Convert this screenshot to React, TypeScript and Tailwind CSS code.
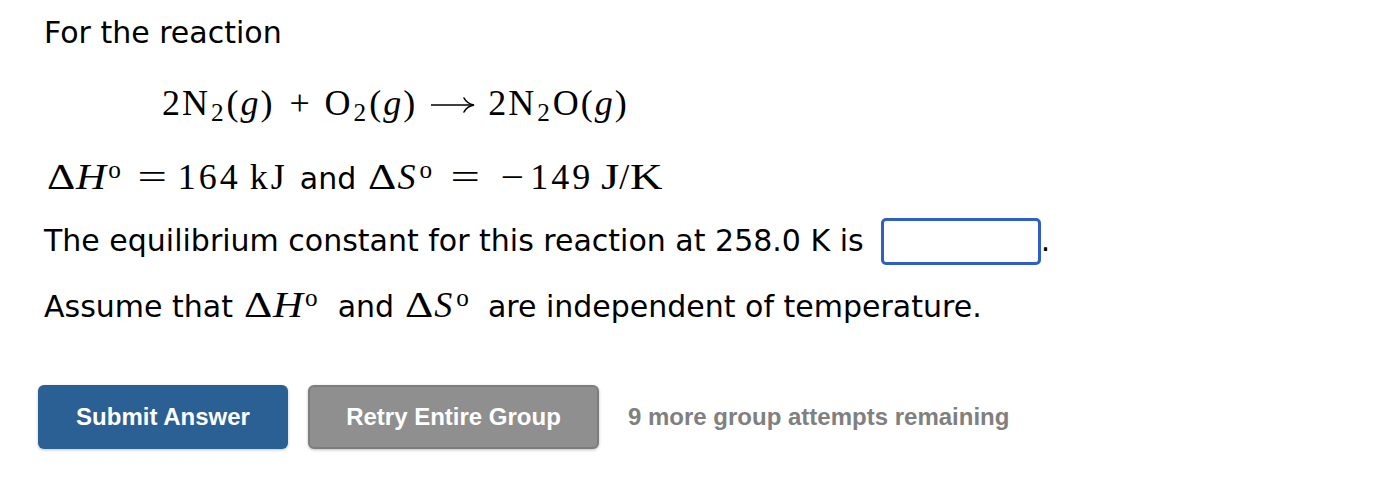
import React from "react";

const SERIF = "[font-family:'Liberation_Serif','DejaVu_Serif',serif] whitespace-nowrap ";

const Sub: React.FC<{ children: React.ReactNode }> = ({ children }) => (
  <span className="relative top-[0.22em] text-[0.7em] leading-none mx-[1px]">{children}</span>
);

const Sup: React.FC<{ children: React.ReactNode; className?: string }> = ({ children, className }) => (
  <span className={"relative -top-[0.42em] text-[0.7em] leading-none " + (className ?? "ml-[3px]")}>{children}</span>
);

const Delta = () => <span className="inline-block scale-x-[1.22] origin-left mr-[6px]">Δ</span>;

const H = () => <i className="inline-block scale-x-[1.15] origin-left mr-[4px]">H</i>;

const Eq: React.FC<{ className?: string }> = ({ className }) => (
  <span className={"inline-block w-[30px] text-center " + (className ?? "")}>
    <span className="inline-block scale-x-[1.45]">=</span>
  </span>
);

const Arrow = () => (
  <svg className="inline-block align-middle mx-[13px] relative -top-[2px]" width="45" height="20" viewBox="0 0 45 20">
    <path d="M1 10 H43" stroke="black" strokeWidth="1.6" fill="none" />
    <path d="M34 3 C36 7 39 9 44 10 C39 11 36 13 34 17" stroke="black" strokeWidth="1.6" fill="none" strokeLinecap="round" />
  </svg>
);

export default function App() {
  return (
    <div className="w-[1380px] h-[484px] bg-white text-black [font-family:'DejaVu_Sans','Verdana',sans-serif] text-[30px]">
      <div className="pl-[44px] pt-[13px]">
        <div className="leading-[40px]">For the reaction</div>
        <div className="mt-[28px] pl-[118px] leading-[44px] text-[36px]">
          <span className={SERIF + "tracking-[2px]"}>
            2N<Sub>2</Sub>(<i>g</i>)
            <span className="inline-block w-[28px] mx-[11px] text-center tracking-normal">+</span>
            O<Sub>2</Sub>(<i>g</i>)
            <Arrow />
            2N<Sub>2</Sub>O(<i>g</i>)
          </span>
        </div>
        <div className="mt-[30px] leading-[44px] flex items-baseline">
          <span className={SERIF + "text-[36px] pl-[3px]"}>
            <Delta />
            <H />
            <Sup className="ml-[2px]">o</Sup>
            <Eq className="ml-[16px] mr-[11px]" />
            <span className="tracking-[3px]">164</span>
            <span className="ml-[9px] tracking-[3px]">kJ</span>
          </span>
          <span className="ml-[12px]">and</span>
          <span className={SERIF + "text-[36px] ml-[12px]"}>
            <Delta />
            <i>S</i>
            <Sup className="ml-[4px]">o</Sup>
            <Eq className="ml-[18px] mr-[22px]" />
            <span className="inline-block scale-x-[1.15]">−</span>
            <span className="ml-[8px] tracking-[3px]">149</span>
            <span className="ml-[8px] inline-block scale-x-[1.3] origin-left">J</span>
            <span className="ml-[4px]">/</span>
            <span className="ml-[1px] inline-block scale-x-[1.25] origin-left">K</span>
          </span>
        </div>
        <div className="mt-[16px] flex items-center leading-[48px]">
          <span>The equilibrium constant for this reaction at 258.0 K is</span>
          <span className="ml-[17px] inline-block w-[160px] h-[47px] border-[3px] border-[#2f5fc4] rounded-[5px] bg-white"></span>
          <span>.</span>
        </div>
        <div className="mt-[16px] leading-[48px] flex items-baseline">
          <span>Assume that</span>
          <span className={SERIF + "text-[36px] ml-[11px]"}>
            <Delta />
            <H />
            <Sup className="ml-[2px]">o</Sup>
          </span>
          <span className="ml-[20px]">and</span>
          <span className={SERIF + "text-[36px] ml-[11px]"}>
            <Delta />
            <i>S</i>
            <Sup className="ml-[4px]">o</Sup>
          </span>
          <span className="ml-[19px]">are independent of temperature.</span>
        </div>
      </div>
      <div className="mt-[54px] pl-[38px] flex items-center [font-family:'Liberation_Sans',Arial,sans-serif] font-bold text-[24px]">
        <button className="w-[250px] h-[64px] rounded-[6px] bg-[#2a6093] text-white shadow-[0_1px_3px_rgba(0,0,0,0.25)]">
          Submit Answer
        </button>
        <button className="ml-[20px] w-[291px] h-[64px] rounded-[6px] bg-[#8f8f8f] border-2 border-[#7d7d7d] text-white shadow-[0_1px_3px_rgba(0,0,0,0.25)]">
          Retry Entire Group
        </button>
        <span className="ml-[29px] text-[#808080]">9 more group attempts remaining</span>
      </div>
    </div>
  );
}
